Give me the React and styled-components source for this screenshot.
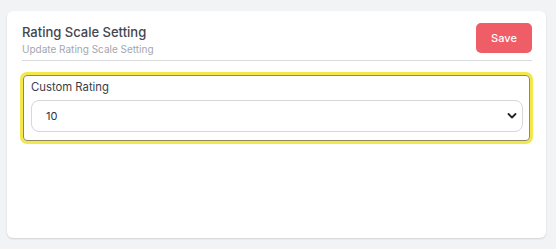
import React from "react";
import styled, { createGlobalStyle } from "styled-components";

const GlobalStyle = createGlobalStyle`
	body {
		margin: 0;
		background: #f1f3f5;
		font-family: "Inter", "Open Sans", sans-serif;
	}
`;

const Page = styled.div`
	padding: 11px 10px 11px 7px;
`;

const Card = styled.div`
	background: #fff;
	border-radius: 6px;
	height: 227px;
	box-sizing: border-box;
	padding: 12px 14px 0 15px;
	box-shadow: 0 1px 2px rgba(0, 0, 0, 0.14);
`;

const Header = styled.div`
	display: flex;
	justify-content: space-between;
	align-items: flex-start;
	padding-bottom: 4px;
	border-bottom: 1px solid #d9dadc;
`;

const Titles = styled.div`
	display: flex;
	flex-direction: column;
	padding-top: 1px;
`;

const Title = styled.h2`
	margin: 0;
	font-size: 13px;
	font-weight: 500;
	color: #42464d;
	line-height: 17px;
`;

const Subtitle = styled.span`
	font-size: 10px;
	color: #a3a7ae;
	line-height: 14px;
	margin-top: 1px;
`;

const SaveButton = styled.button`
	width: 56px;
	height: 30px;
	border: none;
	border-radius: 5px;
	background: #ef5d66;
	color: #fff;
	font-family: inherit;
	font-size: 11px;
	font-weight: 500;
	cursor: pointer;
`;

const Field = styled.div`
	margin: 14px 2px 0 1px;
	border: 1px solid #8c8a5c;
	border-radius: 4px;
	box-shadow: 0 0 0 3px #f3e74d;
	padding: 4px 6px 8px 7px;
	display: flex;
	flex-direction: column;
`;

const Label = styled.label`
	font-size: 11.3px;
	color: #3a3d44;
	line-height: 14px;
	margin-bottom: 6px;
`;

const SelectWrap = styled.div`
	position: relative;
`;

const Select = styled.select`
	width: 100%;
	height: 32px;
	appearance: none;
	border: 1px solid #d6d7d9;
	border-radius: 8px;
	background: #fff;
	padding: 0 14px;
	font-family: inherit;
	font-size: 11px;
	color: #2f3238;
	outline: none;
`;

const Chevron = styled.svg`
	position: absolute;
	right: 6px;
	top: 12px;
	pointer-events: none;
`;

export default function App() {
	return (
		<>
			<GlobalStyle />
			<Page>
				<Card>
					<Header>
						<Titles>
							<Title>Rating Scale Setting</Title>
							<Subtitle>Update Rating Scale Setting</Subtitle>
						</Titles>
						<SaveButton>Save</SaveButton>
					</Header>
					<Field>
						<Label>Custom Rating</Label>
						<SelectWrap>
							<Select defaultValue="10">
								<option>5</option>
								<option>10</option>
							</Select>
							<Chevron width="10" height="8" viewBox="0 0 10 8">
								<path d="M1.5 2l3.5 3.5L8.5 2" fill="none" stroke="#222" strokeWidth="1.8" strokeLinecap="round" strokeLinejoin="round" />
							</Chevron>
						</SelectWrap>
					</Field>
				</Card>
			</Page>
		</>
	);
}
